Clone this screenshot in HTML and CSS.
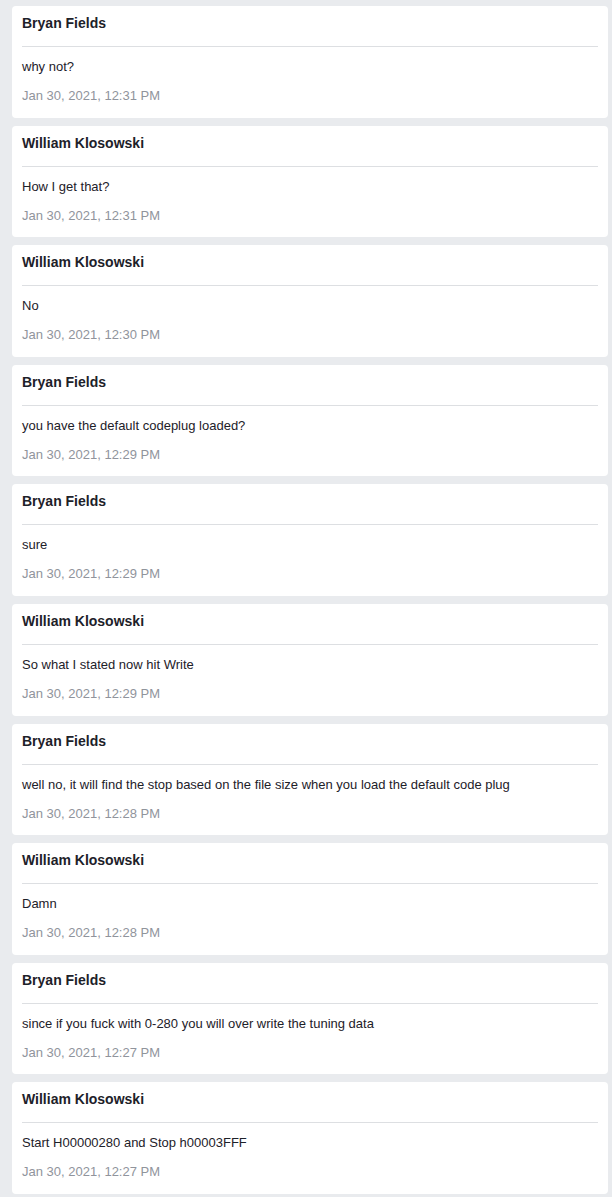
FILE: index.html
```html
<!DOCTYPE html>
<html>
<head>
<meta charset="utf-8">
<link rel="stylesheet" href="styles.css">
</head>
<body>
<div class="feed">
  <div class="card"><div class="name">Bryan Fields</div><div class="msg">why not?</div><div class="date">Jan 30, 2021, 12:31 PM</div></div>
  <div class="card"><div class="name">William Klosowski</div><div class="msg">How I get that?</div><div class="date">Jan 30, 2021, 12:31 PM</div></div>
  <div class="card"><div class="name">William Klosowski</div><div class="msg">No</div><div class="date">Jan 30, 2021, 12:30 PM</div></div>
  <div class="card"><div class="name">Bryan Fields</div><div class="msg">you have the default codeplug loaded?</div><div class="date">Jan 30, 2021, 12:29 PM</div></div>
  <div class="card"><div class="name">Bryan Fields</div><div class="msg">sure</div><div class="date">Jan 30, 2021, 12:29 PM</div></div>
  <div class="card"><div class="name">William Klosowski</div><div class="msg">So what I stated now hit Write</div><div class="date">Jan 30, 2021, 12:29 PM</div></div>
  <div class="card"><div class="name">Bryan Fields</div><div class="msg">well no, it will find the stop based on the file size when you load the default code plug</div><div class="date">Jan 30, 2021, 12:28 PM</div></div>
  <div class="card"><div class="name">William Klosowski</div><div class="msg">Damn</div><div class="date">Jan 30, 2021, 12:28 PM</div></div>
  <div class="card"><div class="name">Bryan Fields</div><div class="msg">since if you fuck with 0-280 you will over write the tuning data</div><div class="date">Jan 30, 2021, 12:27 PM</div></div>
  <div class="card"><div class="name">William Klosowski</div><div class="msg">Start H00000280 and Stop h00003FFF</div><div class="date">Jan 30, 2021, 12:27 PM</div></div>
</div>
</body>
</html>
```
FILE: styles.css
```css
html, body {
  margin: 0;
  padding: 0;
  background: #e9ebee;
}
body {
  font-family: "Liberation Sans", Arial, Helvetica, sans-serif;
  color: #1d2129;
}
.feed {
  display: flex;
  flex-direction: column;
  gap: 8px;
  padding: 6px 4px 4px 12px;
}
.card {
  background: #ffffff;
  border-radius: 4px;
  padding: 8px 10px 13.6px 10px;
  display: flex;
  flex-direction: column;
}
.name {
  font-size: 14px;
  font-weight: bold;
  line-height: 18px;
  padding-bottom: 14px;
  border-bottom: 1px solid #dddfe2;
}
.msg {
  font-size: 13px;
  line-height: 16px;
  margin-top: 12px;
}
.date {
  font-size: 13px;
  line-height: 16px;
  margin-top: 13px;
  color: #90949c;
}
```
